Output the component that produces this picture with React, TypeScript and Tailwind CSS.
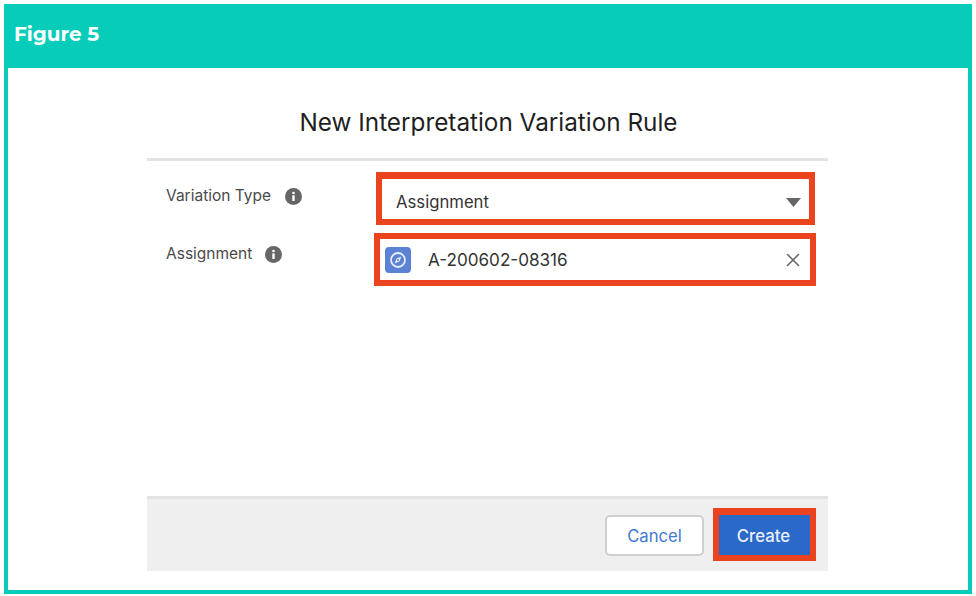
import { X } from 'lucide-react';

function InfoIcon() {
  return (
    <svg width="17" height="17" viewBox="0 0 17 17" className="shrink-0">
      <circle cx="8.5" cy="8.5" r="8.5" fill="#666666" />
      <circle cx="8.5" cy="5" r="1.3" fill="#ffffff" />
      <rect x="7.3" y="7.2" width="2.4" height="5.8" rx="0.5" fill="#ffffff" />
    </svg>
  );
}

function CompassIcon() {
  return (
    <div className="flex h-[26px] w-[26px] shrink-0 items-center justify-center rounded-[4px] bg-[#5b82d3]">
      <svg width="18" height="18" viewBox="0 0 18 18" fill="none">
        <circle cx="9" cy="9" r="7" stroke="#e6ecf9" strokeWidth="1.8" />
        <path d="M12.4 5.6 10.4 10.4 5.6 12.4 7.6 7.6Z" fill="#e6ecf9" />
        <circle cx="9" cy="9" r="1" fill="#5b82d3" />
      </svg>
    </div>
  );
}

export default function App() {
  return (
    <div className="h-[596px] w-[976px] bg-white p-1 font-['Inter',sans-serif]">
      <div className="flex h-[590px] w-[968px] flex-col border-4 border-t-0 border-[#07ccb9]">
        {/* Header */}
        <div className="-mx-1 flex h-[64px] shrink-0 items-center bg-[#07ccb9] pb-[4px] pl-[10px]">
          <span className="font-['Montserrat','Inter',sans-serif] text-[20px] font-bold text-white">Figure 5</span>
        </div>

        {/* Modal */}
        <div className="ml-[139px] flex w-[681px] flex-1 flex-col mb-[19px]">
          <h1 className="ml-[2px] mt-[38px] text-center text-[24.3px] leading-[32px] text-[#1f1f1f]">New Interpretation Variation Rule</h1>
          <div className="mt-[20px] h-[3px] bg-[#e3e3e3]" />

          <div className="flex-1">
            {/* Variation Type */}
            <div className="mt-[11px] flex items-start">
              <div className="flex w-[227px] items-center gap-[14px] pl-[19px] pt-[14px] text-[15.5px] leading-[20px] text-[#4a4a4a]">
                <span>Variation Type</span>
                <InfoIcon />
              </div>
              <div className="ml-[2px] flex h-[53px] w-[439px] items-center justify-between border-[6px] border-t-[7px] border-[#eb431d] pl-[14px] pr-[8px] pt-[7px] text-[16.7px] text-[#333333]">
                <span>Assignment</span>
                <svg width="15" height="9" viewBox="0 0 15 9">
                  <path d="M0 0H15L7.5 9Z" fill="#666666" />
                </svg>
              </div>
            </div>

            {/* Assignment */}
            <div className="mt-[8px] flex items-start">
              <div className="flex w-[227px] items-center gap-[13px] pl-[19px] pt-[11px] text-[15.5px] leading-[20px] text-[#4a4a4a]">
                <span>Assignment</span>
                <InfoIcon />
              </div>
              <div className="flex h-[53px] w-[442px] items-center border-[6px] border-[#eb431d] pl-[5px] pr-[6px] text-[17.1px] text-[#333333]">
                <CompassIcon />
                <span className="ml-[17px] flex-1">A-200602-08316</span>
                <X size={22} strokeWidth={1.7} className="text-[#666666]" />
              </div>
            </div>
          </div>

          {/* Footer */}
          <div className="flex h-[75px] shrink-0 items-start justify-end border-t-[3px] border-[#e3e3e3] bg-[#efefef] pr-[12px] pt-[9px]">
            <button className="mt-[7px] flex h-[41px] w-[99px] items-center justify-center rounded-[5px] border-2 border-[#cfcfcf] bg-white pt-[2px] text-[16.7px] text-[#3f78d2]">
              Cancel
            </button>
            <div className="ml-[9px] h-[53px] w-[103px] border-[6px] border-t-[7px] border-[#eb431d]">
              <button className="flex h-full w-full items-center justify-center bg-[#2b69c9] pt-[3px] pr-[2px] text-[16.8px] font-medium text-[#e9effa]">
                Create
              </button>
            </div>
          </div>
        </div>
      </div>
    </div>
  );
}
